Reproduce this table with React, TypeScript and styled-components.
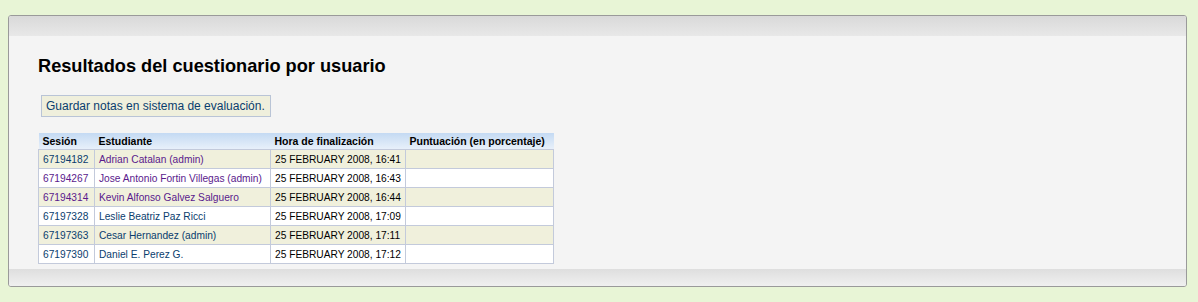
import React from 'react';
import { styled, createGlobalStyle } from 'styled-components';

const GlobalStyle = createGlobalStyle`
    html, body {
        margin: 0;
        padding: 0;
        background: #e8f5d6;
    }
    body {
        font-family: Tahoma, "Liberation Sans", Arial, sans-serif;
    }
`;

const Page = styled.div`
    padding: 15px 11px 15px 8px;
`;

const Panel = styled.div`
    border: 1px solid #9a9a9a;
    border-radius: 3px;
    background: #f4f4f4;
    overflow: hidden;
`;

const TopBand = styled.div`
    height: 20px;
    background: linear-gradient(to bottom, #d9d9d9, #e8e8e8);
`;

const BottomBand = styled.div`
    height: 17px;
    background: linear-gradient(to bottom, #dedede, #f0f0f0);
`;

const Content = styled.div`
    padding: 20px 30px 5px 29px;
`;

const Title = styled.h2`
    margin: 0 0 18px 0;
    font-family: "Liberation Sans", Arial, sans-serif;
    font-size: 18.2px;
    font-weight: bold;
    line-height: 21px;
    color: #000;
`;

const SaveButton = styled.div`
    display: inline-block;
    margin-left: 3px;
    padding: 0 5px 0 4px;
    height: 20px;
    line-height: 20px;
    border: 1px solid #b9c4d6;
    background: #efefdc;
    color: #0a3d6e;
    font-family: "Liberation Sans", Arial, sans-serif;
    font-size: 12px;
`;

const Table = styled.table`
    margin-top: 16px;
    border-collapse: collapse;
    font-family: "Liberation Sans", Arial, sans-serif;
    font-size: 10.2px;
`;

const Th = styled.th<{ $w: number }>`
    width: ${p => p.$w}px;
    height: 16px;
    padding: 0 4px;
    text-align: left;
    font-size: 10.5px;
    font-weight: bold;
    color: #000;
    background: linear-gradient(to bottom, #c4daf3, #e8f0fa);
    white-space: nowrap;
`;

const Row = styled.tr<{ $odd: boolean }>`
    background: ${p => (p.$odd ? '#f0f0dc' : '#ffffff')};
`;

const Td = styled.td`
    height: 18px;
    padding: 0 4px;
    border: 1px solid #c3cadb;
    white-space: nowrap;
    color: #000;
`;

const Link = styled.a<{ $visited?: boolean }>`
    color: ${p => (p.$visited ? '#5a1a8c' : '#0a3d6e')};
    text-decoration: none;
`;

interface Attempt {
    id: string;
    idVisited: boolean;
    name: string;
    nameVisited: boolean;
    finished: string;
}

const attempts: Attempt[] = [
    { id: '67194182', idVisited: false, name: 'Adrian Catalan (admin)', nameVisited: true, finished: '25 FEBRUARY 2008, 16:41' },
    { id: '67194267', idVisited: true, name: 'Jose Antonio Fortin Villegas (admin)', nameVisited: true, finished: '25 FEBRUARY 2008, 16:43' },
    { id: '67194314', idVisited: true, name: 'Kevin Alfonso Galvez Salguero', nameVisited: true, finished: '25 FEBRUARY 2008, 16:44' },
    { id: '67197328', idVisited: false, name: 'Leslie Beatriz Paz Ricci', nameVisited: false, finished: '25 FEBRUARY 2008, 17:09' },
    { id: '67197363', idVisited: false, name: 'Cesar Hernandez (admin)', nameVisited: false, finished: '25 FEBRUARY 2008, 17:11' },
    { id: '67197390', idVisited: false, name: 'Daniel E. Perez G.', nameVisited: false, finished: '25 FEBRUARY 2008, 17:12' },
];

const App: React.FC = () => {
    return (
        <React.Fragment>
            <GlobalStyle />
            <Page>
                <Panel>
                    <TopBand />
                    <Content>
                        <Title>Resultados del cuestionario por usuario</Title>
                        <SaveButton>Guardar notas en sistema de evaluación.</SaveButton>
                        <Table>
                            <thead>
                                <tr>
                                    <Th $w={48}>Sesión</Th>
                                    <Th $w={168}>Estudiante</Th>
                                    <Th $w={127}>Hora de finalización</Th>
                                    <Th $w={140}>Puntuación (en porcentaje)</Th>
                                </tr>
                            </thead>
                            <tbody>
                                {attempts.map((a, i) => (
                                    <Row key={a.id} $odd={i % 2 === 0}>
                                        <Td>
                                            <Link href="#" $visited={a.idVisited}>{a.id}</Link>
                                        </Td>
                                        <Td>
                                            <Link href="#" $visited={a.nameVisited}>{a.name}</Link>
                                        </Td>
                                        <Td>{a.finished}</Td>
                                        <Td />
                                    </Row>
                                ))}
                            </tbody>
                        </Table>
                    </Content>
                    <BottomBand />
                </Panel>
            </Page>
        </React.Fragment>
    );
};

export default App;
